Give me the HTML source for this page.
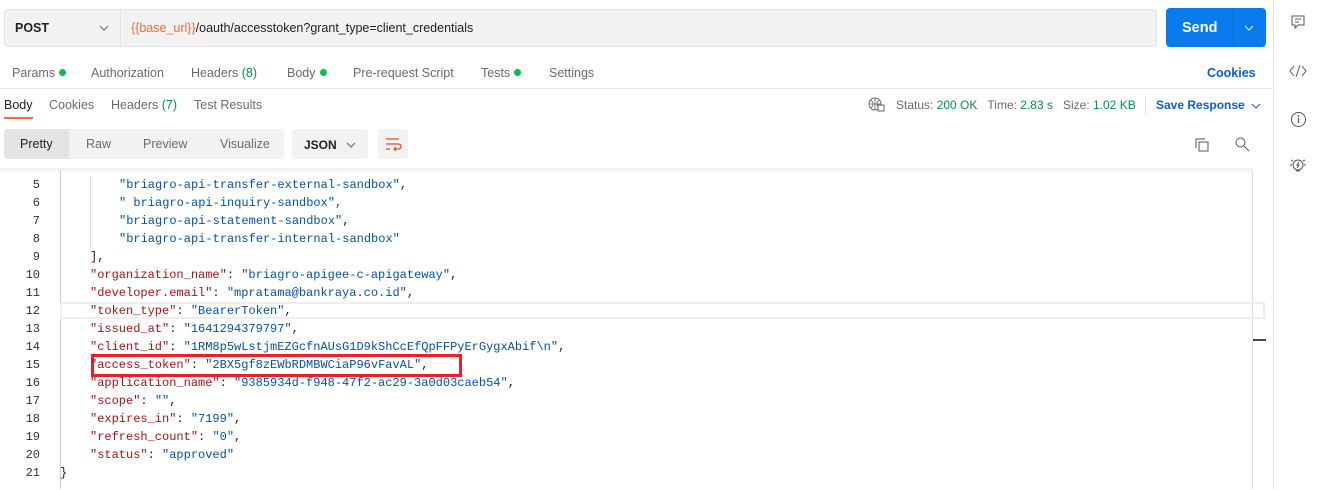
<!DOCTYPE html><html><head><style>
*{margin:0;padding:0;box-sizing:border-box}
body{width:1322px;height:489px;overflow:hidden;background:#fff;font-family:"Liberation Sans",sans-serif;font-size:12.5px;color:#212121;position:relative}
.a{position:absolute;white-space:nowrap}
.g{color:#6b6b6b}
.dot{display:inline-block;width:7px;height:7px;border-radius:50%;background:#0cbb52;margin-left:4px;vertical-align:1px}
.code{font-family:"Liberation Mono",monospace;font-size:12px}
.ln{position:absolute;left:0;width:40px;text-align:right;color:#333;font-family:"Liberation Mono",monospace;font-size:12px}
.k{color:#a31515}.v{color:#0451a5}
.cw{position:absolute;left:0;top:1px;width:1322px;height:489px}
</style></head><body>
<!-- URL bar -->
<div class="a" style="left:4px;top:9px;width:1153px;height:38px;background:#f2f2f2;border:1px solid #e3e3e3;border-radius:4px"></div>
<div class="a" style="left:120px;top:10px;width:1px;height:36px;background:#e3e3e3"></div>
<div class="a" style="left:15px;top:21px;font-weight:bold;font-size:12.5px">POST</div>
<svg class="a" style="left:99px;top:24px" width="10" height="8"><path d="M1 2l4 4 4-4" stroke="#666" fill="none"/></svg>
<div class="a" style="left:131px;top:21px;font-size:12.5px"><span style="color:#f26b3a">{{base_url}}</span>/oauth/accesstoken?grant_type=client_credentials</div>
<div class="a" style="left:1166px;top:8px;width:100px;height:39px;background:#097bed;border-radius:4px"></div>
<div class="a" style="left:1233px;top:8px;width:1px;height:39px;background:#0a6ccf"></div>
<div class="a" style="left:1182px;top:20px;color:#fff;font-weight:bold;font-size:14.5px">Send</div>
<svg class="a" style="left:1244px;top:24px" width="10" height="8"><path d="M1 2l4 4 4-4" stroke="#fff" fill="none"/></svg>
<!-- tabs -->
<div class="a g" style="left:12px;top:66px">Params<span class="dot"></span></div>
<div class="a g" style="left:91px;top:66px">Authorization</div>
<div class="a g" style="left:191px;top:66px">Headers <span style="color:#0a8f4a">(8)</span></div>
<div class="a g" style="left:287px;top:66px">Body<span class="dot"></span></div>
<div class="a g" style="left:353px;top:66px">Pre-request Script</div>
<div class="a g" style="left:481px;top:66px">Tests<span class="dot"></span></div>
<div class="a g" style="left:549px;top:66px">Settings</div>
<div class="a" style="left:1207px;top:66px;color:#0b5cd5;font-weight:bold">Cookies</div>
<div class="a" style="left:0;top:88px;width:1273px;height:1px;background:#e6e6e6"></div>
<!-- response tabs -->
<div class="a" style="left:4px;top:98px">Body</div>
<div class="a" style="left:4px;top:117px;width:29px;height:2px;background:#f26b3a"></div>
<div class="a g" style="left:49px;top:98px">Cookies</div>
<div class="a g" style="left:111px;top:98px">Headers <span style="color:#0a8f4a">(7)</span></div>
<div class="a g" style="left:194px;top:98px">Test Results</div>
<svg class="a" style="left:868px;top:97px" width="17" height="15"><circle cx="7" cy="7" r="6" stroke="#666" fill="none"/><path d="M1 7h12M7 1v12M3 3q4 4 0 8M11 3q-4 4 0 8" stroke="#666" fill="none" stroke-width=".8"/><rect x="10" y="8" width="6" height="6" fill="#fff" stroke="#666"/></svg>
<div class="a g" style="left:896px;top:98px;font-size:12px">Status: <span style="color:#0a8f4a">200 OK</span>&nbsp;&nbsp;&nbsp;Time: <span style="color:#0a8f4a">2.83 s</span>&nbsp;&nbsp;&nbsp;Size: <span style="color:#0a8f4a">1.02 KB</span></div>
<div class="a" style="left:1145px;top:95px;width:1px;height:20px;background:#e6e6e6"></div>
<div class="a" style="left:1156px;top:98px;color:#0b5cd5;font-weight:bold;font-size:12px">Save Response</div>
<svg class="a" style="left:1251px;top:102px" width="10" height="8"><path d="M1 2l4 4 4-4" stroke="#0b5cd5" fill="none"/></svg>
<!-- toolbar -->
<div class="a" style="left:4px;top:129px;width:280px;height:30px;background:#f2f2f2;border-radius:4px"></div>
<div class="a" style="left:4px;top:129px;width:65px;height:30px;background:#e4e4e4;border-radius:4px 0 0 4px"></div>
<div class="a" style="left:20px;top:137px">Pretty</div>
<div class="a g" style="left:86px;top:137px">Raw</div>
<div class="a g" style="left:143px;top:137px">Preview</div>
<div class="a g" style="left:220px;top:137px">Visualize</div>
<div class="a" style="left:292px;top:129px;width:76px;height:30px;background:#f2f2f2;border-radius:4px"></div>
<div class="a" style="left:304px;top:138px;font-weight:bold;font-size:12px">JSON</div>
<svg class="a" style="left:346px;top:141px" width="10" height="8"><path d="M1 2l4 4 4-4" stroke="#666" fill="none"/></svg>
<div class="a" style="left:377px;top:129px;width:31px;height:30px;background:#f2f2f2;border-radius:4px"></div>
<svg class="a" style="left:384px;top:137px" width="18" height="15"><path d="M2 2h13M2 7h12q3 0 3 2.5t-3 2.5h-4M12 10l-2 2 2 2M2 12h4" stroke="#e0502a" fill="none" stroke-width="1.2"/></svg>
<svg class="a" style="left:1194px;top:137px" width="16" height="16"><rect x="5" y="5" width="9" height="9" stroke="#555" fill="none"/><path d="M2 11V2h9" stroke="#555" fill="none"/></svg>
<svg class="a" style="left:1234px;top:136px" width="16" height="16"><circle cx="6.5" cy="6.5" r="4.5" stroke="#555" fill="none"/><path d="M10 10l5 5" stroke="#555"/></svg>
<!-- editor -->
<div class="a" style="left:0;top:168px;width:1252px;height:6px;background:linear-gradient(#eee,#fff)"></div>
<div class="a" style="left:60px;top:170px;width:1px;height:319px;background:#ccc"></div>
<div class="a" style="left:90px;top:176px;width:1px;height:72px;background:#ddd"></div>
<div class="a" style="left:1252px;top:170px;width:1px;height:319px;background:#ddd"></div>
<div class="a" style="left:1273px;top:0;width:1px;height:489px;background:#e6e6e6"></div>
<div class="a" style="left:60px;top:302px;width:1205px;height:17px;border:2px solid #eee"></div>
<div class="a" style="left:1253px;top:339px;width:13px;height:2px;background:#444"></div>
<div class="a" style="left:91px;top:354px;width:371px;height:23px;border:3px solid #e8202a"></div>
<div class="cw code">
<div class="ln" style="top:177px">5</div><div class="a code v" style="left:119px;top:177px">"briagro-api-transfer-external-sandbox"<span style="color:#333">,</span></div>
<div class="ln" style="top:195px">6</div><div class="a code v" style="left:119px;top:195px">" briagro-api-inquiry-sandbox"<span style="color:#333">,</span></div>
<div class="ln" style="top:213px">7</div><div class="a code v" style="left:119px;top:213px">"briagro-api-statement-sandbox"<span style="color:#333">,</span></div>
<div class="ln" style="top:231px">8</div><div class="a code v" style="left:119px;top:231px">"briagro-api-transfer-internal-sandbox"</div>
<div class="ln" style="top:249px">9</div><div class="a code" style="left:90px;top:249px">],</div>
<div class="ln" style="top:267px">10</div><div class="a code" style="left:90px;top:267px"><span class="k">"organization_name"</span>: <span class="v">"briagro-apigee-c-apigateway"</span>,</div>
<div class="ln" style="top:285px">11</div><div class="a code" style="left:90px;top:285px"><span class="k">"developer.email"</span>: <span class="v">"mpratama@bankraya.co.id"</span>,</div>
<div class="ln" style="top:303px">12</div><div class="a code" style="left:90px;top:303px"><span class="k">"token_type"</span>: <span class="v">"BearerToken"</span>,</div>
<div class="ln" style="top:321px">13</div><div class="a code" style="left:90px;top:321px"><span class="k">"issued_at"</span>: <span class="v">"1641294379797"</span>,</div>
<div class="ln" style="top:339px">14</div><div class="a code" style="left:90px;top:339px"><span class="k">"client_id"</span>: <span class="v">"1RM8p5wLstjmEZGcfnAUsG1D9kShCcEfQpFFPyErGygxAbif\n"</span>,</div>
<div class="ln" style="top:357px">15</div><div class="a code" style="left:90px;top:357px"><span class="k">"access_token"</span>: <span class="v">"2BX5gf8zEWbRDMBWCiaP96vFavAL"</span>,</div>
<div class="ln" style="top:375px">16</div><div class="a code" style="left:90px;top:375px"><span class="k">"application_name"</span>: <span class="v">"9385934d-f948-47f2-ac29-3a0d03caeb54"</span>,</div>
<div class="ln" style="top:393px">17</div><div class="a code" style="left:90px;top:393px"><span class="k">"scope"</span>: <span class="v">""</span>,</div>
<div class="ln" style="top:411px">18</div><div class="a code" style="left:90px;top:411px"><span class="k">"expires_in"</span>: <span class="v">"7199"</span>,</div>
<div class="ln" style="top:429px">19</div><div class="a code" style="left:90px;top:429px"><span class="k">"refresh_count"</span>: <span class="v">"0"</span>,</div>
<div class="ln" style="top:447px">20</div><div class="a code" style="left:90px;top:447px"><span class="k">"status"</span>: <span class="v">"approved"</span></div>
<div class="ln" style="top:465px">21</div><div class="a code" style="left:60px;top:465px">}</div>
</div>
<!-- sidebar icons -->
<svg class="a" style="left:1290px;top:14px" width="16" height="16"><path d="M2 2h12v9H8l-3 3v-3H2z" stroke="#555" fill="none"/><path d="M5 5h6M5 8h4" stroke="#555"/></svg>
<svg class="a" style="left:1289px;top:63px" width="18" height="16"><path d="M5 3L1 8l4 5M13 3l4 5-4 5M11 2L7 14" stroke="#555" fill="none"/></svg>
<svg class="a" style="left:1290px;top:111px" width="17" height="17"><circle cx="8.5" cy="8.5" r="7" stroke="#555" fill="none"/><path d="M8.5 7v5" stroke="#555" stroke-width="1.3"/><circle cx="8.5" cy="5" r=".9" fill="#555"/></svg>
<svg class="a" style="left:1289px;top:157px" width="18" height="18"><circle cx="9" cy="8" r="5" stroke="#555" fill="none"/><path d="M10 5l-2 3h2l-2 3M7 14h4M1 8h2M15 8h2M2 3l2 1M16 3l-2 1" stroke="#555" fill="none"/></svg>
</body></html>
